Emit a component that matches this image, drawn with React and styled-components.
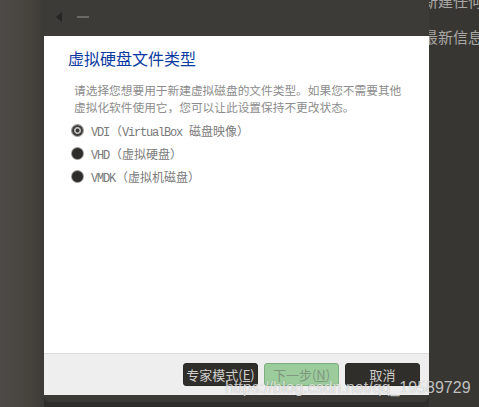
import React from 'react'
import styled, { createGlobalStyle } from 'styled-components'

const GlobalStyle = createGlobalStyle`
  html, body {
    margin: 0;
    padding: 0;
    background: #2f2d2b;
  }
`

const Page = styled.div`
  position: relative;
  display: flex;
  flex-direction: row;
  width: 479px;
  height: 407px;
  overflow: hidden;
  background: #2f2d2b;
  font-family: "Noto Sans CJK SC", sans-serif;
`

const LeftStrip = styled.div`
  width: 44px;
  flex-shrink: 0;
  background: linear-gradient(to right, #4d4a47 0%, #48453f 60%, #3c3a37 100%);
`

const Window = styled.div`
  display: flex;
  flex-direction: column;
  width: 385px;
  height: 402px;
  flex-shrink: 0;
  background: #3a3936;
  border-radius: 0 0 7px 7px;
  overflow: hidden;
`

const TitleBar = styled.div`
  display: flex;
  align-items: center;
  height: 36px;
  flex-shrink: 0;
  padding: 0 0 2px 12px;
  box-sizing: border-box;
  gap: 15px;
  background: #3c3b38;
`

const BackArrow = styled.div`
  width: 0;
  height: 0;
  border-top: 5px solid transparent;
  border-bottom: 5px solid transparent;
  border-right: 6px solid #262523;
`

const Dash = styled.div`
  width: 12px;
  height: 2px;
  background: #6b6966;
`

const Content = styled.div`
  flex: 1;
  background: #ffffff;
  padding: 12px 24px 0 24px;
  border-bottom: 1px solid #dcdcdc;
`

const Title = styled.h1`
  margin: 0;
  font-size: 16px;
  line-height: 20px;
  font-weight: normal;
  color: #0b3aa2;
`

const Description = styled.p`
  margin: 14px 0 0 6px;
  font-size: 11.7px;
  line-height: 16.7px;
  color: #8c8c8c;
`

const Options = styled.div`
  display: flex;
  flex-direction: column;
  margin-top: 4px;
  margin-left: 4px;
`

const OptionRow = styled.label`
  display: flex;
  align-items: center;
  height: 23px;
  gap: 8px;
  font-size: 12px;
  color: #7a7a7a;
`

const Radio = styled.span`
  width: 11px;
  height: 11px;
  border-radius: 50%;
  box-sizing: border-box;
  background: ${p => p.$checked
    ? 'radial-gradient(circle, #3a3a3a 0 1.6px, #b8b6b4 2.2px 3.2px, #3d3c3a 3.8px)'
    : '#2e2d2b'};
  box-shadow: 0 0 0 1px #9a9896;
`

const Mono = styled.span`
  font-family: "Liberation Mono", monospace;
  font-size: 12px;
  letter-spacing: -1.2px;
  margin-right: 1px;
`

const Footer = styled.div`
  display: flex;
  justify-content: flex-end;
  align-items: center;
  flex-shrink: 0;
  gap: 6px;
  height: 41px;
  padding-right: 9px;
  background: #eeeeee;
`

const BottomEdge = styled.div`
  height: 7px;
  flex-shrink: 0;
  background: #3a3936;
`

const Button = styled.div`
  display: flex;
  align-items: center;
  justify-content: center;
  width: 75px;
  height: 23px;
  box-sizing: border-box;
  border-radius: 3px;
  font-size: 13px;
  color: ${p => (p.$primary ? '#7e977e' : '#cfcdca')};
  background: ${p => (p.$primary ? '#9ccb9c' : '#2f2e2b')};
  border: 1px solid ${p => (p.$primary ? '#7fae7f' : '#2a2927')};
`

const Key = styled.span`
  text-decoration: underline;
`

const RightStrip = styled.div`
  flex: 1;
  background: #383633;
  overflow: hidden;
  color: #a9a7a4;
  font-size: 15px;
  white-space: nowrap;
`

const BehindLine = styled.div`
  margin-left: -6px;
  line-height: 20px;
  margin-top: ${p => p.$top}px;
`

const Watermark = styled.div`
  position: absolute;
  left: 225px;
  top: 379px;
  font-family: "Liberation Sans", Arial, sans-serif;
  font-size: 16px;
  color: rgba(255, 255, 255, 0.72);
  text-shadow: 0 0 1px rgba(0, 0, 0, 0.3);
  pointer-events: none;
`

const options = [
  { latin: 'VDI', rest: '（', latin2: 'VirtualBox ', cjk: '磁盘映像）', checked: true },
  { latin: 'VHD', rest: '（虚拟硬盘）' },
  { latin: 'VMDK', rest: '（虚拟机磁盘）' },
]

export default function App() {
  return (
    <Page>
      <GlobalStyle />
      <LeftStrip />
      <Window>
        <TitleBar>
          <BackArrow />
          <Dash />
        </TitleBar>
        <Content>
          <Title>虚拟硬盘文件类型</Title>
          <Description>
            请选择您想要用于新建虚拟磁盘的文件类型。如果您不需要其他虚拟化软件使用它，您可以让此设置保持不更改状态。
          </Description>
          <Options>
            {options.map(o => (
              <OptionRow key={o.latin}>
                <Radio $checked={o.checked} />
                <span>
                  <Mono>{o.latin}</Mono>
                  {o.rest}
                  {o.latin2 && <Mono>{o.latin2}</Mono>}
                  {o.cjk}
                </span>
              </OptionRow>
            ))}
          </Options>
        </Content>
        <Footer>
          <Button>专家模式(<Key>E</Key>)</Button>
          <Button $primary>下一步(<Key>N</Key>)</Button>
          <Button>取消</Button>
        </Footer>
        <BottomEdge />
      </Window>
      <RightStrip>
        <BehindLine $top={-9}>新建任何新</BehindLine>
        <BehindLine $top={16}>最新信息和</BehindLine>
      </RightStrip>
      <Watermark>https://blog.csdn.net/qq_19589729</Watermark>
    </Page>
  )
}
